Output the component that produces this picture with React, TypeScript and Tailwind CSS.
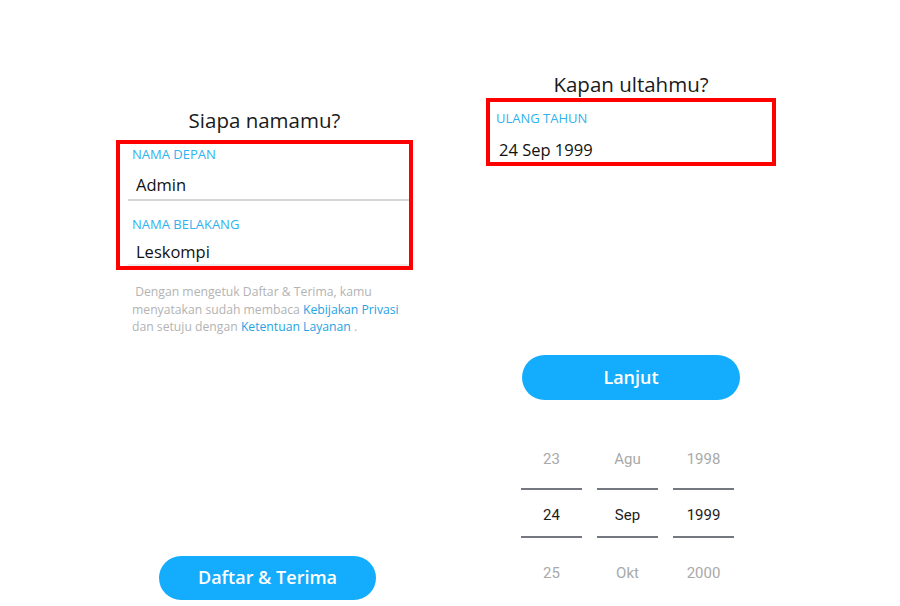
const sans = { fontFamily: '"Open Sans", "Noto Sans", sans-serif' };

const days   = ['23', '24', '25'];
const months = ['Agu', 'Sep', 'Okt'];
const years  = ['1998', '1999', '2000'];

function PickerColumn({ items }: { items: string[] }) {
  return (
    <div className="flex w-[61px] flex-col items-center font-['Roboto',sans-serif] text-[15px]">
      <div className="flex h-[57px] items-center text-[#a9a9a9]">{items[0]}</div>
      <div className="h-[2px] w-full bg-[#737880]" />
      <div className="flex h-[46px] items-center pt-[5px] text-[#1c1c1c]">{items[1]}</div>
      <div className="h-[2px] w-full bg-[#737880]" />
      <div className="flex h-[57px] items-center pt-[14px] text-[#a9a9a9]">{items[2]}</div>
    </div>
  );
}

function NameScreen() {
  return (
    <div className="flex w-[297px] flex-col" style={sans}>
      <h1 className="mt-[106px] text-center text-[20.5px] leading-[28px] text-[#1a1a1a]">Siapa namamu?</h1>

      <div className="mt-[6px] border-4 border-[#ff0000] pt-[2px]">
        <div className="pl-[12px] text-[13px] leading-[16px] text-[#2fb2ee]">NAMA DEPAN</div>
        <div className="mt-[11px] pl-[16px] text-[16.5px] leading-[24px] text-[#111]">Admin</div>
        <div className="ml-[8px] mt-[2px] h-[2px] bg-[#d6d6d6]" />
        <div className="mt-[15px] pl-[12px] text-[13px] leading-[16px] text-[#2fb2ee]">NAMA BELAKANG</div>
        <div className="mt-[8px] pl-[16px] text-[16.5px] leading-[24px] text-[#111]">Leskompi</div>
        <div className="ml-[8px] h-[2px] bg-[#ececec]" />
      </div>

      <p className="mt-[13px] pl-[16px] pr-[2px] text-[12.2px] leading-[17.5px] text-[#b3b3b3]">
        &nbsp;Dengan mengetuk Daftar &amp; Terima, kamu menyatakan sudah membaca{' '}
        <span className="text-[#1ea3e4]">Kebijakan Privasi</span> dan setuju dengan{' '}
        <span className="text-[#1ea3e4]">Ketentuan Layanan</span> .
      </p>

      <button
        type="button"
        className="ml-[43px] mt-[220px] h-[44px] w-[217px] rounded-full bg-[#14acfd] text-[18px] font-semibold text-white"
      >
        Daftar &amp; Terima
      </button>
    </div>
  );
}

function BirthdayScreen() {
  return (
    <div className="flex w-[290px] flex-col" style={sans}>
      <h1 className="mt-[70px] text-center text-[20.5px] leading-[28px] text-[#1a1a1a]">Kapan ultahmu?</h1>

      <div className="border-4 border-[#ff0000] pt-[8px]">
        <div className="pl-[6px] text-[13px] leading-[16px] text-[#2fb2ee]">ULANG TAHUN</div>
        <div className="mt-[12px] pl-[9px] text-[16.5px] leading-[24px] text-[#111]">24 Sep 1999</div>
      </div>

      <button
        type="button"
        className="ml-[36px] mt-[189px] h-[45px] w-[218px] rounded-full bg-[#14acfd] text-[18px] font-semibold text-white"
      >
        Lanjut
      </button>

      <div className="ml-[35px] mt-[31px] flex gap-[15px]">
        <PickerColumn items={days} />
        <PickerColumn items={months} />
        <PickerColumn items={years} />
      </div>
    </div>
  );
}

export default function App() {
  return (
    <div className="flex h-[606px] w-[900px] overflow-hidden bg-white pl-[116px]">
      <NameScreen />
      <div className="w-[73px]" />
      <BirthdayScreen />
    </div>
  );
}
